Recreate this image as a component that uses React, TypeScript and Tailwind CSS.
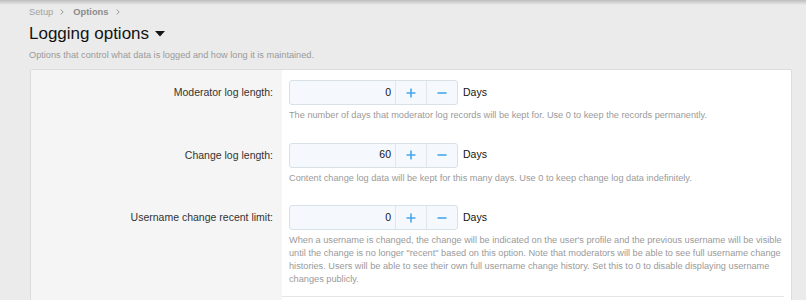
import React from "react";

const Plus = () => (
  <svg width="10" height="10" viewBox="0 0 10 10">
    <path d="M5 0.5V9.5M0.5 5H9.5" stroke="#47a7eb" strokeWidth="1.6" />
  </svg>
);
const Minus = () => (
  <svg width="10" height="10" viewBox="0 0 10 10">
    <path d="M0.5 5H9.5" stroke="#47a7eb" strokeWidth="1.6" />
  </svg>
);

const Chevron = () => (
  <svg width="4" height="6" viewBox="0 0 4 6">
    <path d="M0.6 0.6L3.2 3L0.6 5.4" stroke="#9a9a9a" strokeWidth="1" fill="none" />
  </svg>
);

function NumberBox({ value }: { value: string }) {
  return (
    <div className="flex items-center">
      <div className="flex h-[25px] w-[169px] rounded-[3px] border border-[#d8e0e8] bg-[#f5f9fd]">
        <div className="flex w-[105px] items-center justify-end pr-[4px] text-[10.5px] text-[#141414]">
          {value}
        </div>
        <div className="flex w-[31px] items-center justify-center border-l border-[#dfe6ec]">
          <Plus />
        </div>
        <div className="flex flex-1 items-center justify-center border-l border-[#dfe6ec]">
          <Minus />
        </div>
      </div>
      <span className="ml-[5px] text-[10.5px] text-[#141414]">Days</span>
    </div>
  );
}

function Row({ label, value, explain }: { label: string; value: string; explain: string }) {
  return (
    <div className="flex">
      <div className="w-[251px] shrink-0 bg-[#f5f5f5] pr-[9px] pt-[10px] text-right text-[10.5px] leading-[25px] text-[#333]">
        {label}
      </div>
      <div className="flex-1 pb-[11px] pl-[7px] pr-[7px] pt-[10px]">
        <NumberBox value={value} />
        <div className="mt-[4px] text-[9.2px] leading-[12.7px] text-[#9a9a9a]">{explain}</div>
      </div>
    </div>
  );
}

export default function App() {
  return (
    <div className="relative h-[300px] w-[806px] overflow-hidden bg-[#ebebeb] font-['Liberation_Sans',Arial,sans-serif]">
      <div className="pointer-events-none absolute left-0 right-0 top-0 h-[5px] bg-gradient-to-b from-[rgba(0,0,0,0.2)] to-transparent" />
      <div className="pl-[29px] pr-[14px] pt-[6px]">
        <div className="flex items-center text-[9.3px] leading-[12px] text-[#a0a0a0]">
          <span>Setup</span>
          <span className="ml-[7px] mr-[9px] flex items-center">
            <Chevron />
          </span>
          <span className="font-bold text-[#8a8a8a]">Options</span>
          <span className="ml-[8px] flex items-center">
            <Chevron />
          </span>
        </div>
        <div className="mt-[6px] flex items-center text-[17px] leading-[20px] text-[#141414]">
          <span>Logging options</span>
          <svg className="ml-[6px]" width="10" height="6" viewBox="0 0 10 6">
            <path d="M0 0H10L5 5.5Z" fill="#141414" />
          </svg>
        </div>
        <div className="mt-[5px] text-[9.2px] leading-[12px] text-[#9a9a9a]">
          Options that control what data is logged and how long it is maintained.
        </div>
      </div>
      <div className="ml-[30px] mr-[14px] mt-[8px] rounded-t-[2px] border border-[#dcdcdc] bg-white">
        <Row
          label="Moderator log length:"
          value="0"
          explain="The number of days that moderator log records will be kept for. Use 0 to keep the records permanently."
        />
        <Row
          label="Change log length:"
          value="60"
          explain="Content change log data will be kept for this many days. Use 0 to keep change log data indefinitely."
        />
        <Row
          label="Username change recent limit:"
          value="0"
          explain={`When a username is changed, the change will be indicated on the user's profile and the previous username will be visible until the change is no longer "recent" based on this option. Note that moderators will be able to see full username change histories. Users will be able to see their own full username change history. Set this to 0 to disable displaying username changes publicly.`}
        />
        <div className="flex h-[40px]">
          <div className="w-[251px] shrink-0 bg-[#f5f5f5]" />
          <div className="mr-[7px] flex-1 border-t border-[#e4e4e4]" />
        </div>
      </div>
    </div>
  );
}
